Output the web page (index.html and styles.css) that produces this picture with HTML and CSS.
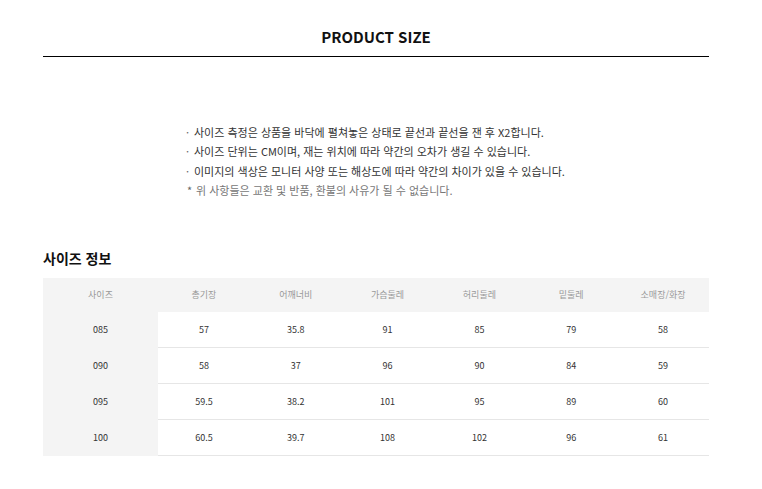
FILE: index.html
```html
<!DOCTYPE html>
<html lang="ko">
<head>
<meta charset="utf-8">
<link rel="stylesheet" href="styles.css">
</head>
<body>
<div class="wrap">
  <h1 class="title">PRODUCT SIZE</h1>
  <ul class="notes">
    <li>사이즈 측정은 상품을 바닥에 펼쳐놓은 상태로 끝선과 끝선을 잰 후 X2합니다.</li>
    <li>사이즈 단위는 CM이며, 재는 위치에 따라 약간의 오차가 생길 수 있습니다.</li>
    <li>이미지의 색상은 모니터 사양 또는 해상도에 따라 약간의 차이가 있을 수 있습니다.</li>
    <li class="star">위 사항들은 교환 및 반품, 환불의 사유가 될 수 없습니다.</li>
  </ul>
  <h2 class="sub">사이즈 정보</h2>
  <table class="size">
    <thead>
      <tr><th>사이즈</th><th>총기장</th><th>어깨너비</th><th>가슴둘레</th><th>허리둘레</th><th>밑둘레</th><th>소매장/화장</th></tr>
    </thead>
    <tbody>
      <tr><th>085</th><td>57</td><td>35.8</td><td>91</td><td>85</td><td>79</td><td>58</td></tr>
      <tr><th>090</th><td>58</td><td>37</td><td>96</td><td>90</td><td>84</td><td>59</td></tr>
      <tr><th>095</th><td>59.5</td><td>38.2</td><td>101</td><td>95</td><td>89</td><td>60</td></tr>
      <tr><th>100</th><td>60.5</td><td>39.7</td><td>108</td><td>102</td><td>96</td><td>61</td></tr>
    </tbody>
  </table>
</div>
</body>
</html>
```

FILE: styles.css
```css
html, body {
  margin: 0;
  padding: 0;
  background: #fff;
}
body {
  font-family: "Noto Sans CJK KR", "Noto Sans", sans-serif;
  color: #222;
}
.wrap {
  width: 666px;
  margin-left: 43px;
}
.title {
  margin: 0;
  padding-top: 26px;
  padding-bottom: 9px;
  height: 21px;
  line-height: 21px;
  font-size: 15px;
  font-weight: 700;
  text-align: center;
  color: #111;
  border-bottom: 1px solid #000;
}
.notes {
  list-style: none;
  margin: 66px 0 0 142px;
  padding: 0;
  font-size: 11px;
  line-height: 19.4px;
  color: #333;
}
.notes li {
  position: relative;
  padding-left: 9px;
}
.notes li::before {
  content: "·";
  position: absolute;
  left: 1px;
  top: 0;
  color: #666;
}
.notes li.star {
  color: #777;
  padding-left: 11px;
}
.notes li.star::before {
  content: "*";
  left: 2px;
}
.sub {
  margin: 47px 0 0;
  font-size: 14px;
  line-height: 20px;
  font-weight: 700;
  color: #111;
}
.size {
  margin-top: 10px;
  width: 666px;
  border-collapse: collapse;
  table-layout: fixed;
  font-size: 9px;
}
.size th, .size td {
  padding: 0;
  text-align: center;
  font-weight: 400;
}
.size thead th {
  height: 34px;
  background: #f4f4f4;
  color: #999;
}
.size thead th:first-child {
  width: 115px;
}
.size tbody th {
  background: #f4f4f4;
  color: #333;
  height: 35px;
  border-bottom: 1px solid #f4f4f4;
}
.size tbody td {
  height: 35px;
  color: #333;
  border-bottom: 1px solid #e6e6e6;
}
```
